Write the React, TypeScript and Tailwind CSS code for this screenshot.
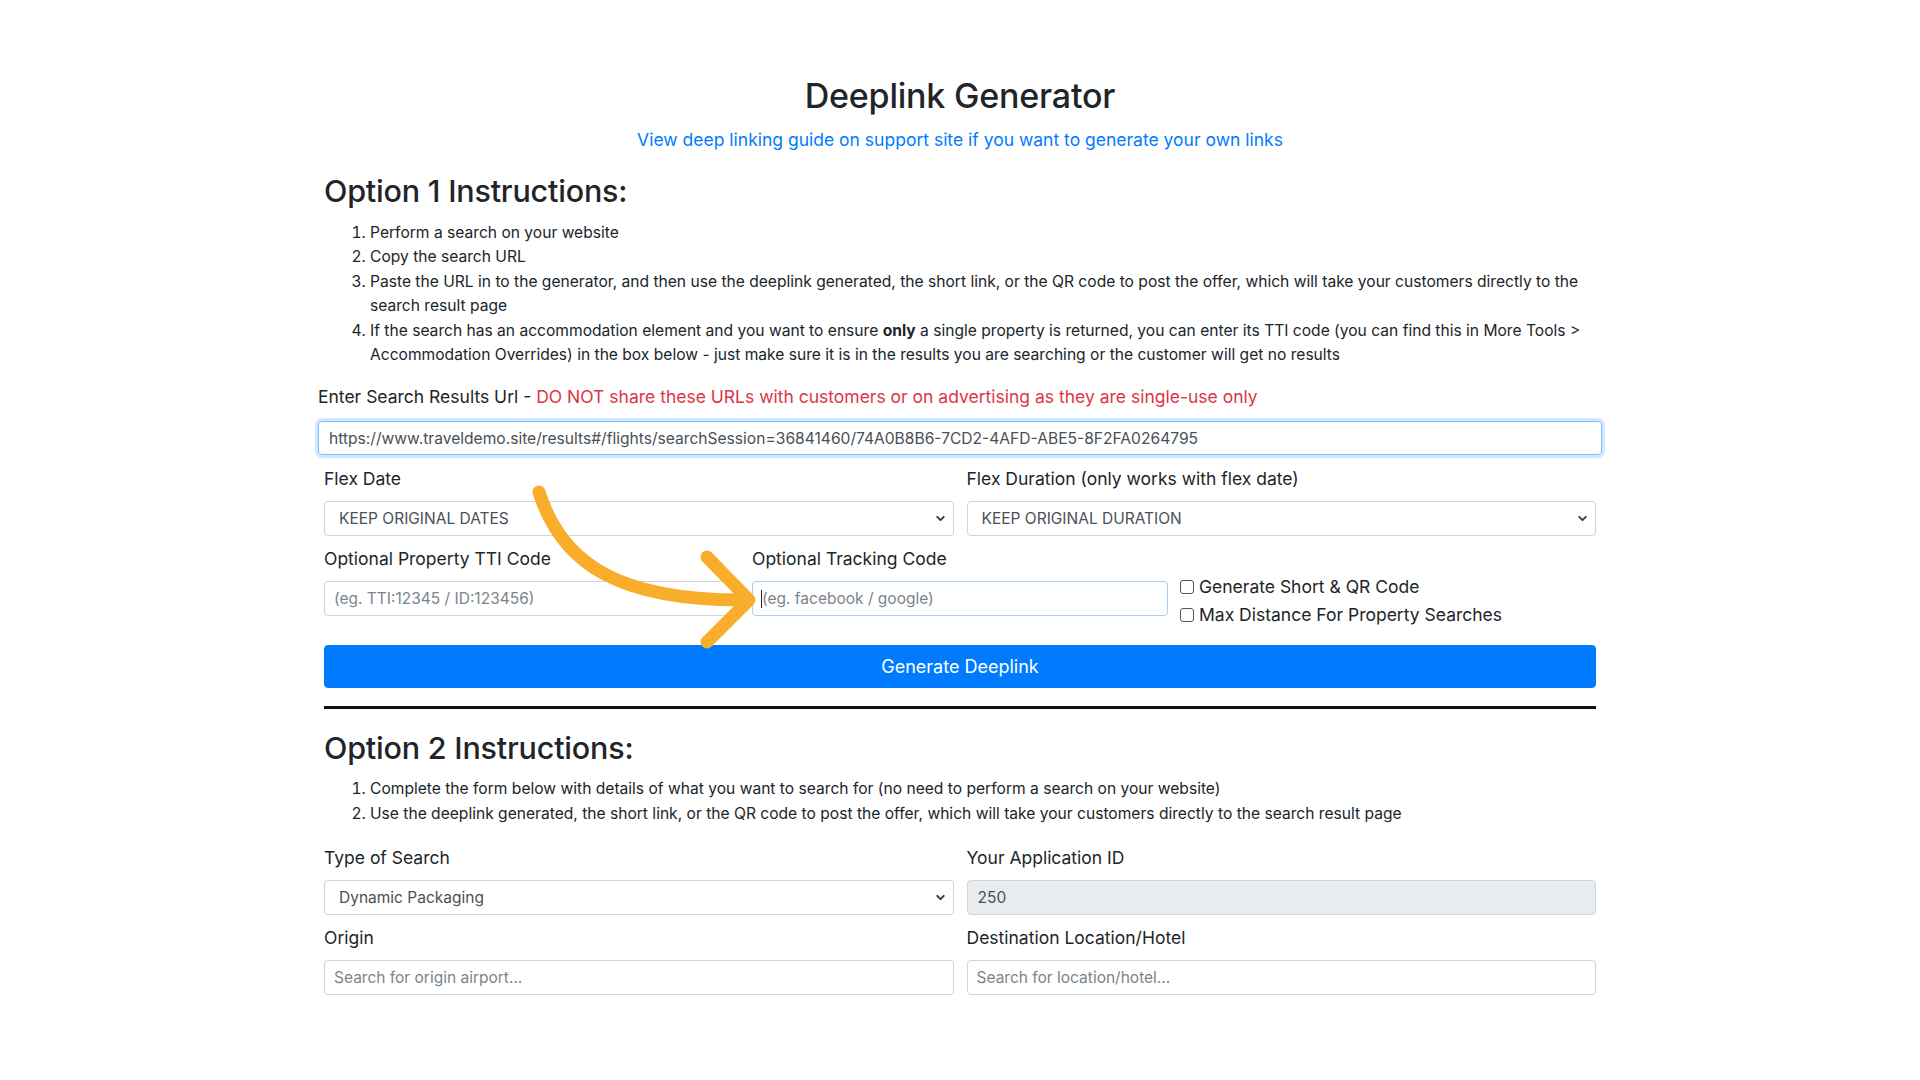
import { ChevronDown } from 'lucide-react';

const font = { fontFamily: 'Inter, "Noto Sans", "Liberation Sans", sans-serif' };

function Label({ children }: { children: React.ReactNode }) {
  return <label className="block text-[17.5px] leading-[27px] text-[#212529] mb-[9px]">{children}</label>;
}

function Select({ value }: { value: string }) {
  return (
    <div className="relative h-[35px] rounded-[4px] border border-[#ced4da] bg-white flex items-center pl-[14px] text-[15.5px] text-[#495057]">
      {value}
      <ChevronDown className="absolute right-[6px] top-[10px] w-[13px] h-[13px] text-[#343a40]" strokeWidth={3.5} />
    </div>
  );
}

function Input({ placeholder, focus }: { placeholder: string; focus?: boolean }) {
  return (
    <div className="relative">
      <input
        readOnly
        placeholder={placeholder}
        className={`w-full h-[35px] rounded-[4px] border px-[9px] text-[15.5px] outline-none bg-white placeholder:text-[#7b848c] ${
          focus ? 'border-[#a8cdf5]' : 'border-[#ced4da]'
        }`}
      />
      {focus && <span className="absolute left-[9px] top-[9px] w-px h-[18px] bg-[#222]" />}
    </div>
  );
}

export default function App() {
  return (
    <div className="relative min-h-[1080px] bg-white text-[#212529]" style={font}>
      <div className="w-[1284px] mx-auto pt-[75px] pb-[80px]">
        <h1 className="text-center text-[34px] leading-[41px] font-medium tracking-[-0.2px]">Deeplink Generator</h1>
        <a href="#" className="block text-center text-[17.5px] leading-[27px] text-[#007bff] mt-[10px] no-underline">
          View deep linking guide on support site if you want to generate your own links
        </a>

        <div className="px-[6px]">
          <h2 className="text-[30.5px] leading-[37px] font-medium mt-[19px] tracking-[-0.2px]">Option 1 Instructions:</h2>
          <ol className="list-decimal pl-[46px] mt-[12px] text-[15.6px] leading-[24.4px] pr-[2px]">
            <li>Perform a search on your website</li>
            <li>Copy the search URL</li>
            <li>
              Paste the URL in to the generator, and then use the deeplink generated, the short link, or the QR code to post the offer, which will take your customers directly to the search result page
            </li>
            <li>
              If the search has an accommodation element and you want to ensure <b>only</b> a single property is returned, you can enter its TTI code (you can find this in More Tools &gt; Accommodation Overrides) in the box below - just make sure it is in the results you are searching or the customer will get no results
            </li>
          </ol>
        </div>

        <p className="text-[17.5px] leading-[27px] mt-[16px]">
          Enter Search Results Url - <span className="text-[#dc3545]">DO NOT share these URLs with customers or on advertising as they are single-use only</span>
        </p>
        <div className="mt-[11px] h-[34px] rounded-[4px] border border-[#80bdff] shadow-[0_0_0_3px_rgba(0,123,255,0.18)] flex items-center px-[10px] text-[15.6px] text-[#495057] whitespace-nowrap overflow-hidden">
          https://www.traveldemo.site/results#/flights/searchSession=36841460/74A0B8B6-7CD2-4AFD-ABE5-8F2FA0264795
        </div>

        <div className="px-[6px]">
          <div className="grid grid-cols-2 gap-x-[13px] mt-[10px]">
            <div>
              <Label>Flex Date</Label>
              <Select value="KEEP ORIGINAL DATES" />
            </div>
            <div>
              <Label>Flex Duration (only works with flex date)</Label>
              <Select value="KEEP ORIGINAL DURATION" />
            </div>
          </div>

          <div className="grid grid-cols-3 gap-x-[12px] mt-[9px] items-start">
            <div>
              <Label>Optional Property TTI Code</Label>
              <Input placeholder="(eg. TTI:12345 / ID:123456)" />
            </div>
            <div>
              <Label>Optional Tracking Code</Label>
              <Input placeholder="(eg. facebook / google)" focus />
            </div>
            <div className="pt-[28px] h-[71px] text-[17.5px] leading-[28px]">
              <label className="flex items-center gap-[5px]">
                <span className="w-[14px] h-[14px] rounded-[3px] border border-[#555] bg-white" />
                Generate Short &amp; QR Code
              </label>
              <label className="flex items-center gap-[5px]">
                <span className="w-[14px] h-[14px] rounded-[3px] border border-[#555] bg-white" />
                Max Distance For Property Searches
              </label>
            </div>
          </div>

          <button className="mt-[29px] w-full h-[43px] rounded-[4px] bg-[#007bff] text-white text-[18px] border border-[#007bff]">
            Generate Deeplink
          </button>

          <div className="mt-[18px] h-[3px] bg-[#111]" />

          <h2 className="text-[30.5px] leading-[37px] font-medium mt-[20px] tracking-[-0.2px]">Option 2 Instructions:</h2>
          <ol className="list-decimal pl-[46px] mt-[11px] text-[15.6px] leading-[24.4px]">
            <li>Complete the form below with details of what you want to search for (no need to perform a search on your website)</li>
            <li>Use the deeplink generated, the short link, or the QR code to post the offer, which will take your customers directly to the search result page</li>
          </ol>

          <div className="grid grid-cols-2 gap-x-[13px] gap-y-[9px] mt-[18px]">
            <div>
              <Label>Type of Search</Label>
              <Select value="Dynamic Packaging" />
            </div>
            <div>
              <Label>Your Application ID</Label>
              <div className="h-[35px] rounded-[4px] border border-[#ced4da] bg-[#e9ecef] flex items-center px-[10px] text-[15.5px] text-[#495057]">250</div>
            </div>
            <div>
              <Label>Origin</Label>
              <Input placeholder="Search for origin airport..." />
            </div>
            <div>
              <Label>Destination Location/Hotel</Label>
              <Input placeholder="Search for location/hotel..." />
            </div>
          </div>
        </div>
      </div>

      <svg className="absolute left-0 top-0 pointer-events-none" width="1920" height="1080" viewBox="0 0 1920 1080">
        <path d="M539 492 C 562 565 620 600 742 600" fill="none" stroke="#f9ae2b" strokeWidth="13" strokeLinecap="round" />
        <path d="M707 557 L749 600 L707 642" fill="none" stroke="#f9ae2b" strokeWidth="13" strokeLinecap="round" strokeLinejoin="round" />
      </svg>
    </div>
  );
}
